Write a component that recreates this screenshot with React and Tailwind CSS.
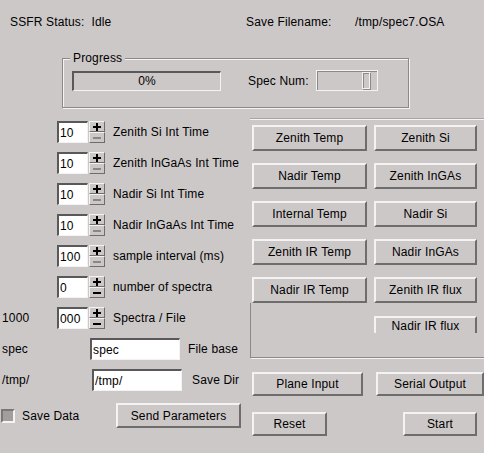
import React from 'react';

const raised = 'border-t-2 border-l-2 border-t-[#f4f2f2] border-l-[#f4f2f2] border-b-2 border-r-2 border-b-[#6f6c6c] border-r-[#6f6c6c]';
const sunken = 'border-t-2 border-l-2 border-t-[#5a5858] border-l-[#5a5858] border-b border-r border-b-[#f4f2f2] border-r-[#f4f2f2]';

const Btn = ({ children, className = '' }) => (
  <div className={`flex items-center justify-center bg-[#cdc8c8] ${raised} ${className}`}>{children}</div>
);

const SpinArrow = ({ minus, dark }) => (
  <div className="w-[16px] h-[11px] flex items-center justify-center border-t border-l border-t-[#f4f2f2] border-l-[#f4f2f2] border-b border-r border-b-[#6f6c6c] border-r-[#6f6c6c]">
    <svg width="8" height="8" viewBox="0 0 8 8">
      <rect x="0" y="3" width="8" height="2" fill={dark ? '#000' : '#8a8686'} />
      {!minus && <rect x="3" y="0" width="2" height="8" fill="#000" />}
    </svg>
  </div>
);

const SpinRow = ({ value, label, left = '', darkMinus = false }) => (
  <div className="flex items-center h-[22px]">
    <div className="w-[57px] pl-[2px]">{left}</div>
    <div className={`w-[31px] h-[22px] bg-white ${sunken} flex items-center pl-[1px]`}>{value}</div>
    <div className="flex flex-col ml-[1px]">
      <SpinArrow dark />
      <SpinArrow minus dark={darkMinus} />
    </div>
    <div className="ml-[8px]">{label}</div>
  </div>
);

const TextRow = ({ left, value, label, inputX, labelGap }) => (
  <div className="flex items-center h-[22px]">
    <div className="pl-[2px]" style={{ width: inputX }}>{left}</div>
    <div className={`w-[90px] h-[22px] bg-white ${sunken} flex items-center pl-[1px]`}>{value}</div>
    <div style={{ marginLeft: labelGap }}>{label}</div>
  </div>
);

export default function App() {
  return (
    <div className="w-[484px] h-[453px] overflow-hidden bg-[#cdc8c8] text-[12px] leading-[14px] tracking-[0.15px] text-black" style={{ fontFamily: '"Liberation Sans", Arial, sans-serif' }}>
      {/* header */}
      <div className="flex pt-[15px] h-[29px]">
        <div className="w-[246px] pl-[10px]">SSFR Status:&nbsp; Idle</div>
        <div className="w-[109px]">Save Filename:</div>
        <div>/tmp/spec7.OSA</div>
      </div>

      {/* progress group */}
      <div className="mt-[29px] ml-[62px] w-[347px] h-[50px] relative border border-[#8c8888] shadow-[inset_1px_1px_0_#f4f2f2,1px_1px_0_#f4f2f2]">
        <div className="absolute -top-[8px] left-[7px] px-[3px] bg-[#cdc8c8]">Progress</div>
        <div className="flex items-center pt-[11px] pl-[9px]">
          <div className={`w-[149px] h-[20px] ${sunken} border-t-[#1e1c1c] border-l-[#1e1c1c] flex items-center justify-center`}>0%</div>
          <div className="ml-[27px] w-[68px]">Spec Num:</div>
          <div className="w-[62px] h-[21px] border border-[#f4f2f2] shadow-[inset_1px_1px_0_#8c8888] flex items-center justify-end pr-[7px]">
            <div className="w-[8px] h-[17px] border border-[#f4f2f2] shadow-[inset_1px_1px_0_#8c8888,1px_1px_0_#8c8888]" />
          </div>
        </div>
      </div>

      {/* main */}
      <div className="flex mt-[11px]">
        <div className="w-[250px] pt-[2px] flex flex-col">
          <div className="flex flex-col gap-[9px]">
            <SpinRow value="10" label="Zenith Si Int Time" />
            <SpinRow value="10" label="Zenith InGaAs Int Time" />
            <SpinRow value="10" label="Nadir Si Int Time" />
            <SpinRow value="10" label="Nadir InGaAs Int Time" />
            <SpinRow value="100" label="sample interval (ms)" />
            <SpinRow value="0" label="number of spectra" darkMinus />
            <SpinRow value="000" label="Spectra / File" left="1000" darkMinus />
          </div>
          <div className="mt-[9px] flex flex-col gap-[9px]">
            <TextRow left="spec" value="spec" label="File base" inputX="90px" labelGap="8px" />
            <TextRow left="/tmp/" value="/tmp/" label="Save Dir" inputX="92px" labelGap="10px" />
          </div>
          <div className="mt-[12px] flex items-center h-[25px]">
            <div className="w-[14px] h-[14px] ml-[1px] bg-[#a29e9e] border-t-2 border-l-2 border-t-[#7a7777] border-l-[#7a7777] border-b-2 border-r-2 border-b-[#f4f2f2] border-r-[#f4f2f2]" />
            <div className="ml-[7px] w-[94px]">Save Data</div>
            <Btn className="w-[125px] h-[25px]">Send Parameters</Btn>
          </div>
        </div>

        <div className="w-[234px] flex flex-col">
          <div className="border-t border-t-[#f4f2f2] shadow-[0_-1px_0_#a8a4a4]">
            <div className="pt-[5px] pl-[2px] grid grid-cols-[115px_103px] gap-x-[7px] gap-y-[12px]">
              <Btn className="h-[26px]">Zenith Temp</Btn>
              <Btn className="h-[26px]">Zenith Si</Btn>
              <Btn className="h-[26px]">Nadir Temp</Btn>
              <Btn className="h-[26px]">Zenith InGAs</Btn>
              <Btn className="h-[26px]">Internal Temp</Btn>
              <Btn className="h-[26px]">Nadir Si</Btn>
              <Btn className="h-[26px]">Zenith IR Temp</Btn>
              <Btn className="h-[26px]">Nadir InGAs</Btn>
              <Btn className="h-[26px]">Nadir IR Temp</Btn>
              <Btn className="h-[26px]">Zenith IR flux</Btn>
            </div>
            <div className="h-[55px] border-l border-b border-[#8c8888] shadow-[1px_1px_0_#f4f2f2] pt-[13px] pl-[123px]">
              <div className="w-[103px] h-[17px] overflow-hidden">
                <Btn className="h-[26px] items-start pt-[1px]">Nadir IR flux</Btn>
              </div>
            </div>
          </div>
          <div className="mt-[14px] pl-[2px] flex gap-[13px]">
            <Btn className="w-[111px] h-[24px]">Plane Input</Btn>
            <Btn className="w-[108px] h-[24px]">Serial Output</Btn>
          </div>
          <div className="mt-[16px] pl-[2px] flex justify-between pr-[7px]">
            <Btn className="w-[75px] h-[24px]">Reset</Btn>
            <Btn className="w-[74px] h-[24px]">Start</Btn>
          </div>
        </div>
      </div>
    </div>
  );
}
